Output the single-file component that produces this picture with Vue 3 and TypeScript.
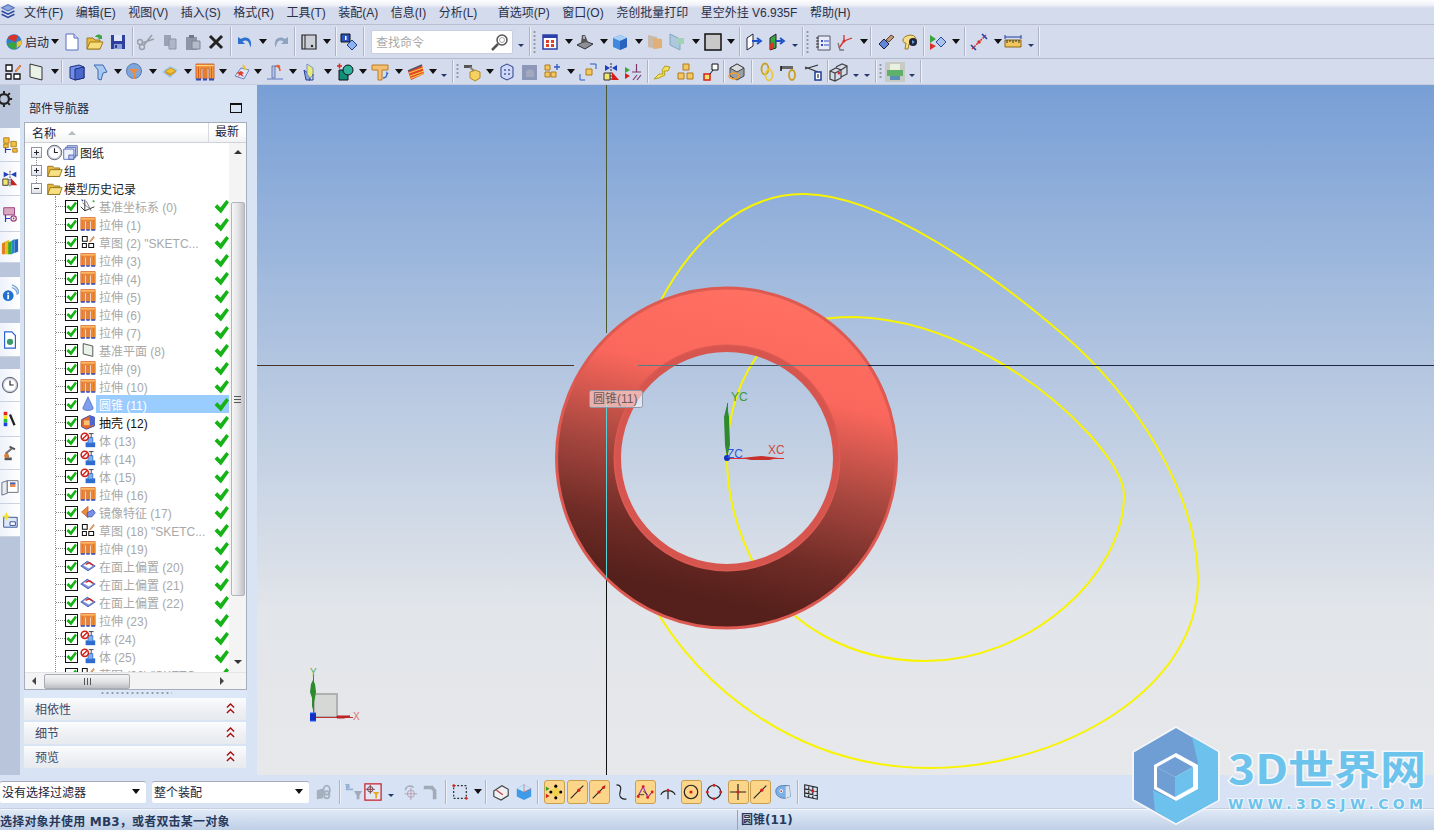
<script setup lang="ts">
type Token = [string, number]

const widths: Record<string, number> = { a: 9, sa: 7, s: 2, d: 3, search: 142, start: 44 }

// 把中心坐标转成 flow 布局用的宽度 + 左间距
function flow(row: Token[], start = 0) {
  let end = start
  return row.map(([raw, x]) => {
    const on = raw.startsWith('*')
    const kind = on ? raw.slice(1) : raw
    const w = on ? 21 : widths[kind] ?? 20
    const ml = x - w / 2 - end
    end = x + w / 2
    return { kind, on, w, ml }
  })
}

const menus = [
  '文件(F)', '编辑(E)', '视图(V)', '插入(S)', '格式(R)', '工具(T)', '装配(A)', '信息(I)', '分析(L)',
  '首选项(P)', '窗口(O)', '尧创批量打印', '星空外挂 V6.935F', '帮助(H)',
]

const row1 = flow([
  ['start', 27], ['a', 55], ['newdoc', 72], ['open', 95], ['save', 118], ['s', 133],
  ['cut', 147], ['copy', 170], ['paste', 193], ['del', 216], ['s', 231],
  ['undo', 245], ['a', 263], ['redo', 281], ['s', 295], ['book', 309], ['a', 327], ['s', 336],
  ['infocard', 349], ['s', 364], ['search', 442], ['sa', 521], ['s', 530], ['d', 534],
  ['grid', 550], ['a', 569], ['scanner', 585], ['a', 604], ['cube', 620], ['a', 639],
  ['folderface', 655], ['panel', 677], ['a', 696], ['square', 713], ['a', 731], ['s', 740],
  ['arrowdoc', 754], ['arrowdoc2', 777], ['sa', 795], ['s', 803], ['d', 807],
  ['notes', 823], ['axes', 845], ['a', 864], ['s', 871], ['wrench', 886], ['palette', 909], ['s', 924],
  ['playdia', 938], ['a', 956], ['s', 965], ['dimred', 979], ['a', 998], ['ruler', 1013], ['sa', 1031], ['s', 1039],
])

const row2 = flow([
  ['sketch', 13], ['plane', 36], ['a', 55], ['s', 62], ['boxblue', 77], ['pointer', 100], ['a', 118],
  ['balloon', 134], ['a', 153], ['plate', 170], ['a', 188], ['extrude', 205], ['a', 223],
  ['spark', 242], ['a', 258], ['weld', 275], ['a', 293], ['bluearrow', 310], ['a', 328],
  ['tealplus', 346], ['a', 363], ['tee', 380], ['a', 399], ['stripes', 416], ['a', 433], ['sa', 444],
  ['s', 453], ['d', 457], ['hammer', 472], ['a', 490], ['gearcube', 507], ['greycube', 530],
  ['cubeplus', 552], ['a', 571], ['cubedash', 588], ['mirror', 611], ['flag', 633], ['s', 648],
  ['link', 662], ['cubes3', 686], ['diag', 711], ['s', 724], ['boxcircle', 737], ['s', 752],
  ['chain', 767], ['chainham', 789], ['scissors', 813], ['s', 828], ['wire', 839], ['sa', 856], ['sa', 867],
  ['s', 876], ['d', 880], ['printer', 895], ['sa', 912], ['s', 921],
])

const row3 = flow([
  ['bolt', 324], ['s', 340], ['filtergrey', 354], ['filterbox', 373], ['sa', 391], ['crossgrey', 410],
  ['pipegrey', 431], ['s', 446], ['dashbox', 460], ['a', 478], ['s', 486], ['wirebook', 501], ['cubeclip', 524], ['s', 538],
  ['*dots', 554], ['*line', 577], ['*linept', 599], ['curve', 621], ['*zigzag', 645], ['tangent', 668],
  ['*circdot', 691], ['circpts', 714], ['*plus', 738], ['*line', 760], ['shield', 783], ['s', 798], ['gridpt', 811],
], 309)

const railCells: [string, number][] = [
  ['gear', 43], ['treecubes', 34], ['treemirror', 34], ['treecyl', 36], ['books', 31], ['', 14], ['wifi', 33], ['', 13],
  ['docglobe', 34], ['', 12], ['clock', 33], ['colorbar', 35], ['robot', 33], ['pages', 34], ['sparkwin', 33],
]
const grayRail = new Set(['gear', ''])

const body = 'body'
const ex = 'extrude'
const feats: [string, string][] = [
  ['csys', '基准坐标系 (0)'], [ex, '拉伸 (1)'], ['sketch', '草图 (2) "SKETC...'], [ex, '拉伸 (3)'], [ex, '拉伸 (4)'],
  [ex, '拉伸 (5)'], [ex, '拉伸 (6)'], [ex, '拉伸 (7)'], ['plane', '基准平面 (8)'], [ex, '拉伸 (9)'], [ex, '拉伸 (10)'],
  ['cone', '圆锥 (11)'], ['shell', '抽壳 (12)'], [body, '体 (13)'], [body, '体 (14)'], [body, '体 (15)'], [ex, '拉伸 (16)'],
  ['mirrorfeat', '镜像特征 (17)'], ['sketch', '草图 (18) "SKETC...'], [ex, '拉伸 (19)'], ['offset', '在面上偏置 (20)'],
  ['offset', '在面上偏置 (21)'], ['offset', '在面上偏置 (22)'], [ex, '拉伸 (23)'], [body, '体 (24)'], [body, '体 (25)'],
  ['sketch', '草图 (26) "SKETC...'],
]

const panels = ['相依性', '细节', '预览']
</script>

<template>
  <div class="app">
    <!-- 图标 -->
    <svg class="defs" xmlns="http://www.w3.org/2000/svg">
      <symbol id="logo" viewBox="0 0 20 20"><path d="M2 6l8-4 8 4-8 4z" fill="#8fa6e0" stroke="#2b4aa0"/><path d="M2 10l8 4 8-4M2 14l8 4 8-4" fill="none" stroke="#2b4aa0" stroke-width="2"/></symbol>
      <symbol id="start" viewBox="0 0 20 20"><circle cx="10" cy="10" r="8.500" fill="#2f7fd0"/><path d="M3 6a8 8 0 0 1 11-3l-2 7z" fill="#d8322a"/><path d="M3 12a8 8 0 0 0 9 6l1-6-5-2z" fill="#3aa63a"/><path d="M13 10l5-2 0 5-5 4z" fill="#f2c230"/></symbol>
      <symbol id="newdoc" viewBox="0 0 20 20"><path d="M4 2h8l4 4v12H4z" fill="#fff" stroke="#5a6ec0"/><path d="M12 2v4h4" fill="#d6def5" stroke="#5a6ec0"/></symbol>
      <symbol id="open" viewBox="0 0 20 20"><path d="M2 17V6h6l2 2h5v9z" fill="#e8b93c" stroke="#a07a1e"/><path d="M2 17l3-7h13l-3 7z" fill="#f7dc7a" stroke="#a07a1e"/><path d="M10 5c2-3 5-3 6-1l1-1v4h-4l1-1c-1-1-2-1-4-1z" fill="#3aa63a"/></symbol>
      <symbol id="folder" viewBox="0 0 20 20"><path d="M2 17V5h6l2 2h6v10z" fill="#e8b93c" stroke="#8a6a1a"/><path d="M2 17l3-8h14l-3 8z" fill="#f9e080" stroke="#8a6a1a"/></symbol>
      <symbol id="sheets" viewBox="0 0 20 20"><path d="M6 2h12v12H6z" fill="#cfd8f0" stroke="#4a62b0"/><path d="M4 4h12v12H4z" fill="#dfe6f8" stroke="#4a62b0"/><path d="M2 6h12v12H2z" fill="#eef2fc" stroke="#4a62b0"/><path d="M8 13h6v5H8z" fill="#b8c6ea" stroke="#4a62b0"/></symbol>
      <symbol id="save" viewBox="0 0 20 20"><path d="M3 3h14v14H3z" fill="#2f3f9e"/><path d="M6 3h8v6H6z" fill="#dfe6f7"/><path d="M6 12h8v5H6z" fill="#8fa1d6"/><path d="M7 13h2v3H7z" fill="#2f3f9e"/></symbol>
      <symbol id="cut" viewBox="0 0 20 20"><path d="M15 3l-8 10M17 7L5 11" stroke="#9aa0a8" stroke-width="1.600" fill="none"/><circle cx="5" cy="15" r="2.500" fill="none" stroke="#9aa0a8" stroke-width="1.500"/><circle cx="3" cy="10" r="2.500" fill="none" stroke="#9aa0a8" stroke-width="1.500"/></symbol>
      <symbol id="copy" viewBox="0 0 20 20"><path d="M4 3h7v11H4z" fill="#9aa2b4"/><path d="M9 7h7v10H9z" fill="#aeb6c8" stroke="#8d95a8"/></symbol>
      <symbol id="paste" viewBox="0 0 20 20"><path d="M3 5h11v13H3z" fill="#8e96a6"/><path d="M6 3h5v3H6z" fill="#6f7686"/><path d="M9 9h8v8H9z" fill="#b4bbc9" stroke="#7f8696"/></symbol>
      <symbol id="del" viewBox="0 0 20 20"><path d="M4 4l12 12M16 4L4 16" stroke="#222" stroke-width="3"/></symbol>
      <symbol id="undo" viewBox="0 0 20 20"><path d="M3 5v7h7l-2.500-2.500c3-2 6-1 7 3l1 3c2-6-1-10-5-10-2 0-3 .5-4.500 1.500z" fill="#2f6fd0"/></symbol>
      <symbol id="redo" viewBox="0 0 20 20"><path d="M17 5v7h-7l2.500-2.500c-3-2-6-1-7 3l-1 3c-2-6 1-10 5-10 2 0 3 .5 4.500 1.500z" fill="#8ca4bf"/></symbol>
      <symbol id="book" viewBox="0 0 20 20"><path d="M3 3h14v14H3z" fill="#ccd0d6" stroke="#222" stroke-width="1.200"/><path d="M6 3v14" stroke="#222"/><circle cx="13" cy="14" r="1.200" fill="#222"/></symbol>
      <symbol id="infocard" viewBox="0 0 20 20"><path d="M2 2h9v8H2z" fill="#2a55c0" stroke="#111"/><path d="M6 4h1.500v4H6z" fill="#fff"/><path d="M13 8l5 5-5 5-5-5z" fill="#8fb2ea" stroke="#1e3e90"/></symbol>
      <symbol id="mag" viewBox="0 0 20 20"><circle cx="12" cy="8" r="5" fill="#fff" stroke="#555" stroke-width="1.500"/><circle cx="12" cy="8" r="2.500" fill="none" stroke="#aaa"/><path d="M8 12l-6 6" stroke="#555" stroke-width="2.500"/></symbol>
      <symbol id="grid" viewBox="0 0 20 20"><path d="M3 3h14v14H3z" fill="#fff" stroke="#2b3fa8" stroke-width="1.500"/><path d="M3 3h14v3H3z" fill="#2b3fa8"/><path d="M6 8h3v3H6zM11 8h3v3h-3zM6 12h3v3H6zM11 12h3v3h-3z" fill="#e0402a"/></symbol>
      <symbol id="scanner" viewBox="0 0 20 20"><path d="M2 13l8-4 8 3-8 5z" fill="#8a8f98" stroke="#333"/><path d="M6 11l1-8h3l3 7z" fill="#555"/><path d="M8 4h2v3H8z" fill="#aab"/></symbol>
      <symbol id="cube" viewBox="0 0 20 20"><path d="M3 6l7-3 7 3v9l-7 3-7-3z" fill="#3f8ae0"/><path d="M3 6l7 3 7-3-7-3z" fill="#a8d0f5"/><path d="M10 9v9l7-3V6z" fill="#2a62c0"/></symbol>
      <symbol id="folderface" viewBox="0 0 20 20" opacity=".65"><path d="M3 3l9 2v12l-9-2z" fill="#c2a98a"/><path d="M8 6l9 1v9l-9 1z" fill="#e89a3c"/></symbol>
      <symbol id="panel" viewBox="0 0 20 20" opacity=".75"><path d="M3 2l10 5v11l-10-5z" fill="#9fc4d8" stroke="#6c93b0"/><path d="M11 6h6v6h-6z" fill="#8fd0a0"/></symbol>
      <symbol id="square" viewBox="0 0 20 20"><path d="M2 2h16v16H2z" fill="#c9c9c9" stroke="#111" stroke-width="1.500"/></symbol>
      <symbol id="arrowdoc" viewBox="0 0 20 20"><path d="M3 6l6-4v12l-6 4z" fill="#fff" stroke="#223"/><path d="M8 9h7M13 6l4 3-4 3" fill="none" stroke="#1e50c8" stroke-width="1.800"/></symbol>
      <symbol id="arrowdoc2" viewBox="0 0 20 20"><path d="M3 6l6-4v14l-6 2z" fill="#3aa63a" stroke="#223"/><path d="M3 12l4-2v6l-4 2z" fill="#d8322a"/><path d="M9 9h6M13 6l4 3-4 3" fill="none" stroke="#1e50c8" stroke-width="1.800"/></symbol>
      <symbol id="notes" viewBox="0 0 20 20"><path d="M5 4h12v14H5z" fill="#e8ecf8" stroke="#556"/><path d="M3 6h3M3 9h3M3 12h3M3 15h3" stroke="#333"/><path d="M8 8h2v2H8zM8 12h2v2H8z" fill="#3050c0"/><path d="M11 9h5M11 13h5" stroke="#3050c0"/></symbol>
      <symbol id="axes" viewBox="0 0 20 20"><path d="M9 9l8-3M9 9V3M9 9l-5 7" stroke="#d8322a" stroke-width="1.300" fill="none"/><path d="M3 11l2 7h4" stroke="#777" stroke-width="1.300" fill="none"/><circle cx="9" cy="9" r="1.500" fill="#d8322a"/></symbol>
      <symbol id="wrench" viewBox="0 0 20 20"><path d="M3 12l5-5 5 5-5 5z" fill="#5f86d8" stroke="#223"/><path d="M10 8l5-5 3 2-5 5z" fill="#c69a6a" stroke="#544"/></symbol>
      <symbol id="palette" viewBox="0 0 20 20"><path d="M4 8c0-4 9-7 12-3s-1 8-6 7l-1 5H6l1-6c-2 0-3-1-3-3z" fill="#f6dd8c" stroke="#a07a1e"/><circle cx="14" cy="10" r="4" fill="#223"/><path d="M13 8l3 2-3 2z" fill="#5f9de0"/></symbol>
      <symbol id="playdia" viewBox="0 0 20 20"><path d="M2 3l6 4-6 4z" fill="#3aa63a"/><path d="M2 11l6 3-6 4z" fill="#d8322a"/><path d="M8 10l5-5 5 5-5 5z" fill="#a9c4ec" stroke="#2b4aa0"/></symbol>
      <symbol id="dimred" viewBox="0 0 20 20"><path d="M3 17L17 3" stroke="#d8322a" stroke-width="1.500" stroke-dasharray="2 1"/><path d="M2 13l5 5M13 2l5 5" stroke="#1e3ea8" stroke-width="1.500"/><circle cx="10" cy="10" r="1.800" fill="#d8322a"/></symbol>
      <symbol id="ruler" viewBox="0 0 20 20"><path d="M2 8h16v7H2z" fill="#f2c65a" stroke="#8a6a20"/><path d="M4 8v3M7 8v2M10 8v3M13 8v2M16 8v3" stroke="#333"/><path d="M2 5h16M2 3v4M18 3v4" stroke="#1e3ea8"/></symbol>
      <symbol id="sketch" viewBox="0 0 20 20"><path d="M3 3h6v6H3zM3 12h5v5H3zM11 12h6v5h-6z" fill="#fff" stroke="#111" stroke-width="1.300"/><path d="M12 9l5-6 1 1-5 6z" fill="#e8b93c" stroke="#c8392a" stroke-width=".6"/></symbol>
      <symbol id="plane" viewBox="0 0 20 20"><path d="M4 2l12 3v13l-12-3z" fill="#e9f2e6" stroke="#333"/></symbol>
      <symbol id="boxblue" viewBox="0 0 20 20"><path d="M3 5l9-2 5 2v11l-9 2-5-2z" fill="#6f8fe6" stroke="#1e2e80"/><path d="M8 7v11l9-2V5z" fill="#4a68cc" stroke="#1e2e80"/></symbol>
      <symbol id="pointer" viewBox="0 0 20 20"><path d="M4 3h9l4 7-4 1-2 7-3-1V8z" fill="#a8c8f0" stroke="#3a68b0"/></symbol>
      <symbol id="balloon" viewBox="0 0 20 20"><circle cx="10" cy="9" r="7.500" fill="#7fa6d8" stroke="#5a7bb0"/><path d="M5 7h10L11 11v6H9v-6z" fill="#f08a3c"/></symbol>
      <symbol id="plate" viewBox="0 0 20 20"><path d="M2 10l8-6 8 4-8 8z" fill="#9cc8ec"/><path d="M5 9l6-3 5 3-6 3z" fill="#f2c230" stroke="#c8962a"/><path d="M5 9v2l5 3 6-4V9l-6 3z" fill="#d89a20"/></symbol>
      <symbol id="extrude" viewBox="0 0 20 20"><path d="M1 2h18v15h-5V6h-2v11H8V6H6v11H1z" fill="#f59a3a" stroke="#c8501e" stroke-width=".8"/><path d="M1 3.500h18" stroke="#ffd48a"/><path d="M3.500 5v11M10 5v11M16.500 5v11" stroke="#d8601e"/><path d="M1 17.500h5M8 17.500h4M14 17.500h5" stroke="#2b4ac0" stroke-width="2"/></symbol>
      <symbol id="spark" viewBox="0 0 20 20"><path d="M3 14l6-8 8 2-5 9z" fill="#dfe6f8" stroke="#6c7fc0"/><path d="M9 9l3 2-2 1 2 3-4-2-2 2 1-3-3-1 3-1z" fill="#e0402a"/><path d="M11 3l3 5" stroke="#f2c230" stroke-width="2"/></symbol>
      <symbol id="weld" viewBox="0 0 20 20"><path d="M2 16h16v2H2z" fill="#98a8d8"/><path d="M7 4h3v12H7z" fill="#b8c4e4" stroke="#6a7cb0"/><path d="M10 4c4 0 5 2 5 5" stroke="#e05a2a" stroke-width="1.500" fill="none"/><path d="M12 3l3 1-1 2" stroke="#e05a2a" fill="none"/></symbol>
      <symbol id="bluearrow" viewBox="0 0 20 20"><path d="M4 8l6 5v5H6z" fill="#8aa6e0" stroke="#2b3f90"/><path d="M7 2l6 4v7l-3 3-3-4z" fill="#e6ec7a" stroke="#5a6ec0" stroke-width=".7"/><path d="M13 12v6h-4" stroke="#2b3f90" fill="none"/></symbol>
      <symbol id="tealplus" viewBox="0 0 20 20"><path d="M3 8h9v10H3z" fill="#0f8f7a" stroke="#111"/><circle cx="12" cy="8" r="5" fill="#2fb09a" stroke="#111"/><path d="M1 4h5M3.500 1.500v5" stroke="#e0201a" stroke-width="1.500"/></symbol>
      <symbol id="tee" viewBox="0 0 20 20"><path d="M2 3h16v5h-6v10H8V8H2z" fill="#f2c070" stroke="#c07a20"/><path d="M13 16c3 0 4-2 4-5l1 1" fill="none" stroke="#2b6ac0" stroke-width="1.400"/></symbol>
      <symbol id="stripes" viewBox="0 0 20 20"><path d="M2 9l14-6 2 9-13 6z" fill="#e8402a"/><path d="M3 11l14-5M4 14l14-5M4.500 16.500l13-5" stroke="#f2d040" stroke-width="1.100"/><path d="M2 9l14-6" stroke="#556" stroke-width="1.500"/></symbol>
      <symbol id="hammer" viewBox="0 0 20 20"><path d="M8 10l5-2 5 2v6l-5 3-5-3z" fill="#f6d060" stroke="#b08a20"/><path d="M2 3h8v3H2z" fill="#555"/><path d="M8 5l4 4" stroke="#887" stroke-width="2"/></symbol>
      <symbol id="gearcube" viewBox="0 0 20 20"><path d="M4 5l6-3 6 3v10l-6 3-6-3z" fill="#cfd8f5" stroke="#2b3f90"/><path d="M7 7h2v2H7zM11 7h2v2h-2zM7 11h2v2H7zM11 11h2v2h-2z" fill="#6a7cc0"/></symbol>
      <symbol id="greycube" viewBox="0 0 20 20"><path d="M2 3h15v15H2z" fill="#8d97b8"/><path d="M6 9l4-2 4 2v6H6z" fill="#a3a9bd"/></symbol>
      <symbol id="cubeplus" viewBox="0 0 20 20"><path d="M3 3h5v5H3zM3 10h5v5H3zM9 10h5v5H9z" fill="#f4c860" stroke="#b07a18"/><path d="M15 2v6M12 5h6" stroke="#2b5ac0" stroke-width="1.300"/></symbol>
      <symbol id="cubedash" viewBox="0 0 20 20"><path d="M8 7h6v6H8z" fill="#f4c860" stroke="#b07a18"/><path d="M2 12v6h5M12 2h6v5" fill="none" stroke="#2b5ac0"/></symbol>
      <symbol id="mirror" viewBox="0 0 20 20"><path d="M10 1v18" stroke="#223" stroke-dasharray="2 1"/><path d="M4 3l5 3-5 3zM16 3l-5 3 5 3z" fill="#1e3ec0"/><path d="M3 11h6v7H3z" fill="#f2e66a" stroke="#333"/><path d="M11 10l7 8h-7z" fill="#d8201a"/></symbol>
      <symbol id="flag" viewBox="0 0 20 20"><path d="M2 5l5 3-5 3z" fill="#3aa63a"/><path d="M2 11l5 3-5 3z" fill="#d8201a"/><path d="M9 10h9M13.500 2v8M10 18l4-5M14 18l4-5" stroke="#7a3a6a" stroke-width="1.200"/></symbol>
      <symbol id="link" viewBox="0 0 20 20"><path d="M2 17l5-5h4l-1-4 3-4 5 1-2 4h-4l1 4-6 3z" fill="#f2e25a" stroke="#b0a020"/></symbol>
      <symbol id="cubes3" viewBox="0 0 20 20"><path d="M7 2h6v6H7zM2 11h6v6H2zM11 11h6v6h-6z" fill="#f4c860" stroke="#b07a18"/></symbol>
      <symbol id="diag" viewBox="0 0 20 20"><path d="M11 2h6v6h-6z" fill="#fff" stroke="#111"/><path d="M3 12h6v6H3z" fill="#f2e66a" stroke="#d8201a" stroke-width="1.500"/><path d="M9 12l3-4" stroke="#111"/></symbol>
      <symbol id="boxcircle" viewBox="0 0 20 20"><path d="M3 6l7-4 7 4v8l-7 4-7-4z" fill="#9a9fa8" stroke="#444"/><path d="M3 6l7 4 7-4-7-4z" fill="#d8dbe0" stroke="#444"/><ellipse cx="7" cy="14" rx="5" ry="3" fill="none" stroke="#f0a030" stroke-width="1.500"/></symbol>
      <symbol id="chain" viewBox="0 0 20 20"><ellipse cx="8" cy="7" rx="3.500" ry="5.500" fill="none" stroke="#c8a020" stroke-width="1.800"/><ellipse cx="12" cy="13" rx="3.500" ry="5.500" fill="none" stroke="#e8c840" stroke-width="1.800"/></symbol>
      <symbol id="chainham" viewBox="0 0 20 20"><path d="M2 4h12v3H2z" fill="#666"/><path d="M2 4v5" stroke="#111" stroke-width="1.500"/><ellipse cx="13" cy="13" rx="3" ry="5" fill="none" stroke="#c8a020" stroke-width="1.800"/></symbol>
      <symbol id="scissors" viewBox="0 0 20 20"><path d="M2 7l13-4M2 5l13 5" stroke="#333" stroke-width="1.300"/><path d="M12 10h6v8h-6z" fill="#fff" stroke="#1e3e90" stroke-width="1.500"/><path d="M14.500 12h1v4h-1z" fill="#111"/></symbol>
      <symbol id="wire" viewBox="0 0 20 20"><path d="M1 9l6-3 5 2v8l-6 3-5-2zM7 5l6-3 5 2v8l-6 3M1 9l5 2 6-3M6 11v8M12 8l6-4" fill="none" stroke="#444" stroke-width="1.200"/><circle cx="10" cy="11" r="1.500" fill="#d8322a"/></symbol>
      <symbol id="printer" viewBox="0 0 20 20"><path d="M0 0h20v20H0z" fill="#c8cbc4"/><path d="M5 2h10v6H5z" fill="#e8f0e0"/><path d="M2 8h16v6H2z" fill="#5fb06a"/><path d="M5 14h10v4H5z" fill="#5c8fb8"/></symbol>
      <symbol id="bolt" viewBox="0 0 20 20" opacity=".55"><path d="M2 8l7-2v11l-7 1z" fill="#7d8592"/><ellipse cx="13" cy="8" rx="3.500" ry="5" fill="none" stroke="#7d8592" stroke-width="2"/><ellipse cx="13" cy="13" rx="3" ry="4" fill="none" stroke="#7d8592" stroke-width="2"/></symbol>
      <symbol id="filtergrey" viewBox="0 0 20 20" opacity=".6"><path d="M10 9h9l-3 5v4h-3v-4z" fill="#7d8592"/><path d="M2 3v4h7M5 5l-3-3 3 0" fill="none" stroke="#6c8fbf" stroke-width="2"/></symbol>
      <symbol id="filterbox" viewBox="0 0 20 20"><path d="M1 1h18v18H1z" fill="#e2e9f6" stroke="#c8202a" stroke-width="1.400"/><circle cx="7" cy="7" r="3" fill="none" stroke="#444"/><path d="M7 2v10M2 7h10" stroke="#8a2a30"/><path d="M10 10h7l-2.500 3v4h-2v-4z" fill="#e8a820"/></symbol>
      <symbol id="crossgrey" viewBox="0 0 20 20" opacity=".6"><circle cx="11" cy="12" r="4" fill="none" stroke="#9a6f7f"/><path d="M11 5v14M4 12h14" stroke="#9a6f7f"/><path d="M5 8c0-5 7-6 9-3" fill="none" stroke="#7d8592" stroke-width="1.600"/></symbol>
      <symbol id="pipegrey" viewBox="0 0 20 20" opacity=".6"><path d="M2 3h10l4 5v10h-4V9l-2-2H2z" fill="#7d8592"/></symbol>
      <symbol id="dashbox" viewBox="0 0 20 20"><path d="M3 3h14v14H3z" fill="none" stroke="#222" stroke-dasharray="2 2" stroke-width="1.300"/><circle cx="3" cy="3" r="1.500" fill="#d8201a"/><circle cx="17" cy="17" r="1.500" fill="#d8201a"/></symbol>
      <symbol id="wirebook" viewBox="0 0 20 20"><path d="M2 9l9-6 7 4v7l-8 5-8-4z" fill="#eef0f4" stroke="#444" stroke-width="1.300"/><path d="M5 8l7 5" stroke="#c84040" stroke-width="1.500"/></symbol>
      <symbol id="cubeclip" viewBox="0 0 20 20"><path d="M2 6l8-4 8 4v9l-8 4-8-4z" fill="#3f9ae8"/><path d="M2 6l8 4 8-4-8-4z" fill="#c8e6fa"/><path d="M10 1v9l8-4" fill="none" stroke="#d86a6a" stroke-width=".8"/></symbol>
      <symbol id="dots" viewBox="0 0 20 20"><path d="M1 4l4 2.500-4 2.500z" fill="#2ca02c"/><path d="M1 12l4 2.500-4 2.500z" fill="#d8201a"/><path d="M12 3l6 7-6 7-6-7z" fill="#f2d050"/><circle cx="12" cy="3.500" r="1.700"/><circle cx="6.500" cy="10" r="1.700"/><circle cx="17.500" cy="10" r="1.700"/><circle cx="12" cy="16.500" r="1.700"/></symbol>
      <symbol id="line" viewBox="0 0 20 20"><path d="M3 17L17 3" stroke="#222" stroke-width="1.200"/><circle cx="12" cy="8" r="1.800" fill="#d8201a"/></symbol>
      <symbol id="linept" viewBox="0 0 20 20"><path d="M3 17L17 3" stroke="#222" stroke-width="1.200"/><circle cx="10" cy="10" r="1.800" fill="#d8201a"/><circle cx="15" cy="5" r="1.800" fill="#d8201a"/></symbol>
      <symbol id="curve" viewBox="0 0 20 20"><path d="M5 2c6 0 5 5 4 8s-1 8 7 8" fill="none" stroke="#222" stroke-width="1.300"/></symbol>
      <symbol id="zigzag" viewBox="0 0 20 20"><path d="M2 15l6-11 5 12 5-6" fill="none" stroke="#a030a0" stroke-width="1.300"/><path d="M3 13h6M8 9l5 4" stroke="#333"/><circle cx="2.500" cy="15" r="1.600" fill="#d8201a"/><circle cx="8" cy="4" r="1.600" fill="#d8201a"/><circle cx="13" cy="16" r="1.600" fill="#d8201a"/><circle cx="18" cy="10" r="1.600" fill="#d8201a"/></symbol>
      <symbol id="tangent" viewBox="0 0 20 20"><path d="M2 13c3-6 13-6 16 0M10 7v11" fill="none" stroke="#222" stroke-width="1.300"/><circle cx="10" cy="8" r="1.500" fill="#d8201a"/></symbol>
      <symbol id="circdot" viewBox="0 0 20 20"><circle cx="10" cy="10" r="7.500" fill="none" stroke="#222" stroke-width="1.300"/><circle cx="10" cy="10" r="1.800" fill="#d8201a"/></symbol>
      <symbol id="circpts" viewBox="0 0 20 20"><circle cx="10" cy="10" r="7.500" fill="none" stroke="#222" stroke-width="1.300"/><g fill="#d8201a"><circle cx="10" cy="2.500" r="1.700"/><circle cx="10" cy="17.500" r="1.700"/><circle cx="2.500" cy="10" r="1.700"/><circle cx="17.500" cy="10" r="1.700"/></g></symbol>
      <symbol id="plus" viewBox="0 0 20 20"><path d="M10 1v18M1 10h18" stroke="#222" stroke-width="1.300"/><circle cx="10" cy="10" r="1.800" fill="#d8201a"/></symbol>
      <symbol id="shield" viewBox="0 0 20 20"><path d="M2 9c0-5 5-7 15-6l1 12-6 2c-6 0-10-3-10-8z" fill="#7ab0e8" stroke="#5a7aa8"/><path d="M13 4l4-1 1 12-5 2z" fill="#dde3ea"/><circle cx="8" cy="9" r="2" fill="#fff"/><circle cx="8" cy="9" r="1" fill="#d8201a"/></symbol>
      <symbol id="gridpt" viewBox="0 0 20 20"><path d="M3 2l14 3v13L3 15zM7.500 3v13M12 4v13M3 6.500l14 3M3 11l14 3" fill="none" stroke="#222" stroke-width="1.200"/><circle cx="12" cy="9" r="1.800" fill="#d8201a"/></symbol>
      <symbol id="gear" viewBox="0 0 20 20"><circle cx="10" cy="10" r="5.500" fill="none" stroke="#222" stroke-width="2.500"/><path d="M10 1v3M10 16v3M1 10h3M16 10h3M3.500 3.500l2 2M14.500 14.500l2 2M3.500 16.500l2-2M14.500 5.500l2-2" stroke="#222" stroke-width="2.200"/></symbol>
      <symbol id="treecubes" viewBox="0 0 20 20"><path d="M3 2h6v6H3zM11 6h6v6h-6zM3 9h5v4H3z" fill="#f2c040" stroke="#b07a18"/><path d="M5 13v6M5 15h6" stroke="#1e3ec0" stroke-width="1.300"/><path d="M13 14h5v4h-5z" fill="#f2c040" stroke="#b07a18"/></symbol>
      <symbol id="treemirror" viewBox="0 0 20 20"><path d="M10 1v18" stroke="#223" stroke-dasharray="2 1"/><path d="M3 2l6 3-6 3zM17 2l-6 3 6 3z" fill="#1e3ec0"/><path d="M2 10h6v7H2z" fill="#f2e66a" stroke="#333"/><path d="M11 9l7 8h-7z" fill="#c8201a"/></symbol>
      <symbol id="treecyl" viewBox="0 0 20 20"><path d="M3 3h12v8H3z" fill="#d8a8c0" stroke="#9a3a7a"/><path d="M5 11v8M5 15h5" stroke="#1e3ec0" stroke-width="1.300"/><circle cx="14" cy="15" r="3" fill="none" stroke="#9a3a7a" stroke-width="1.300"/><circle cx="14" cy="15" r="1" fill="#9a3a7a"/></symbol>
      <symbol id="books" viewBox="0 0 20 20"><path d="M1 6l4-2v14H1z" fill="#e0801e"/><path d="M5 4l4-2v16H5z" fill="#e0c020"/><path d="M8 5l4-2v15H8z" fill="#3aa63a"/><path d="M12 3l3-2v15l-3 2z" fill="#1e8ac8"/><path d="M15 2l4-1v14l-4 2z" fill="#2a62c0"/></symbol>
      <symbol id="wifi" viewBox="0 0 20 20"><circle cx="8" cy="13" r="6" fill="#1e70d0"/><path d="M7 9.500h2v1.500H7zM7 12h2v5H7z" fill="#fff"/><path d="M12 4a8 8 0 0 1 6 8M12 1a11 11 0 0 1 8 10" fill="none" stroke="#7aa4d8" stroke-width="1.600"/></symbol>
      <symbol id="docglobe" viewBox="0 0 20 20"><path d="M4 1h8l4 4v14H4z" fill="#fff" stroke="#2a62d0" stroke-width="1.300"/><circle cx="10" cy="12" r="3.500" fill="#3a9a6a"/></symbol>
      <symbol id="clock" viewBox="0 0 20 20"><circle cx="10" cy="10" r="8.500" fill="#c5cdd8" stroke="#556"/><circle cx="10" cy="10" r="6.500" fill="#fff"/><path d="M10 5v5h4" fill="none" stroke="#222" stroke-width="1.300"/></symbol>
      <symbol id="colorbar" viewBox="0 0 20 20"><path d="M3 2h4v4H3z" fill="#e82020"/><path d="M3 6h4v4H3z" fill="#f0e020"/><path d="M3 10h4v4H3z" fill="#20c040"/><path d="M3 14h4v4H3z" fill="#2040e0"/><path d="M10 5l5 12" stroke="#222" stroke-width="2.500"/></symbol>
      <symbol id="robot" viewBox="0 0 20 20"><path d="M4 18h8v-3H4z" fill="#555"/><path d="M8 15l-2-5 6-5" fill="none" stroke="#777" stroke-width="2.500"/><path d="M10 2l6 3-1 2-6-3z" fill="#555"/><circle cx="6" cy="13" r="2.500" fill="#e87a20"/></symbol>
      <symbol id="pages" viewBox="0 0 20 20"><path d="M1 5l6-2v14l-6 2z" fill="#e8ecf2" stroke="#667"/><path d="M7 3h12v13H7z" fill="#fff" stroke="#667"/><path d="M10 5h6v5h-6z" fill="#f08a50"/><path d="M10 5h6v2h-6z" fill="#3a6ad0"/></symbol>
      <symbol id="sparkwin" viewBox="0 0 20 20"><path d="M3 7h15v11H3z" fill="#dce8fa" stroke="#2a4a90"/><path d="M10 12h6v4h-6z" fill="#fff" stroke="#2a4a90"/><path d="M6 1l1.500 3.500L11 6 7.500 7.500 6 11 4.500 7.500 1 6l3.500-1.500z" fill="#f4e040"/></symbol>
      <symbol id="csys" viewBox="0 0 20 20"><path d="M6 2v14l12-5M6 16l-5-5" fill="none" stroke="#333" stroke-width="1.200"/><path d="M3 6l10 8M8 4l6 12" stroke="#667"/><circle cx="17" cy="4" r="1.300" fill="#3aa63a"/><path d="M2 2l2 2" stroke="#1e3ec0" stroke-width="1.500"/></symbol>
      <symbol id="cone" viewBox="0 0 20 20"><path d="M10 1l6.500 14a6.500 3 0 0 1-13 0z" fill="#7f9fee" stroke="#3a5ab0" stroke-width=".8"/></symbol>
      <symbol id="shell" viewBox="0 0 20 20"><path d="M2 7l10-5 6 2v11l-10 4-6-3z" fill="#e86a2a" stroke="#1e3ec0"/><path d="M12 2v13l6-2V4z" fill="#4a68d0"/><path d="M5 8h7v6H5z" fill="#f8c070"/></symbol>
      <symbol id="body" viewBox="0 0 20 20"><path d="M7 13h12v6H7z" fill="#2f6cd0"/><path d="M10 7h6v7h-6z" fill="#7fb0ec" stroke="#2f6cd0"/><circle cx="6" cy="6" r="4.500" fill="#fff" stroke="#d0201a" stroke-width="2"/><path d="M3 9l6-6" stroke="#d0201a" stroke-width="1.800"/><path d="M11 2h6M14 2v5" stroke="#222"/></symbol>
      <symbol id="mirrorfeat" viewBox="0 0 20 20"><path d="M2 10l8-7v14z" fill="#f08a3c" stroke="#c05a20"/><path d="M9 11l7-4 3 4-4 5H9z" fill="#7a90e8" stroke="#3a50b0"/></symbol>
      <symbol id="offset" viewBox="0 0 20 20"><path d="M1 10l8-6 10 6-9 6z" fill="#7a90d8" stroke="#3a50b0"/><path d="M4 9l5-3 7 4-5 3z" fill="#fff"/><path d="M7 8l5-2 4 3" fill="none" stroke="#d8201a" stroke-width="1.500"/></symbol>
      <symbol id="check" viewBox="0 0 14 14"><path d="M.5 7.500L3 5l3 3 5.500-7L14 3 6.500 13.500z" fill="#15b315"/></symbol>
      <symbol id="chev" viewBox="0 0 10 12"><path d="M1 5l4-4 4 4M1 11l4-4 4 4" fill="none" stroke="#a80c0c" stroke-width="1.500"/></symbol>
    </svg>

    <header class="menubar">
      <svg class="menu-logo"><use href="#logo" /></svg>
      <span v-for="(m, i) in menus" :key="m" class="menu" :class="{ wide: i === 9 }">{{ m }}</span>
    </header>

    <div class="toolbar tall">
      <template v-for="(t, i) in row1" :key="i">
        <div class="cell" :class="t.kind" :style="{ width: t.w + 'px', marginLeft: t.ml + 'px' }">
          <template v-if="t.kind === 'start'">
            <svg class="ico"><use href="#start" /></svg><span>启动</span>
          </template>
          <template v-else-if="t.kind === 'search'">
            <span class="placeholder">查找命令</span>
            <svg class="ico"><use href="#mag" /></svg>
          </template>
          <svg v-else-if="!widths[t.kind]" class="ico"><use :href="'#' + t.kind" /></svg>
        </div>
      </template>
    </div>
    <div class="toolbar">
      <div
        v-for="(t, i) in row2"
        :key="i"
        class="cell"
        :class="t.kind"
        :style="{ width: t.w + 'px', marginLeft: t.ml + 'px' }"
      >
        <svg v-if="!widths[t.kind]" class="ico"><use :href="'#' + t.kind" /></svg>
      </div>
    </div>

    <main class="main">
      <aside class="rail">
        <div
          v-for="(c, i) in railCells"
          :key="i"
          class="rail-cell"
          :class="{ white: !grayRail.has(c[0]), gearcell: c[0] === 'gear' }"
          :style="{ height: c[1] + 'px' }"
        >
          <svg v-if="c[0]" class="ico"><use :href="'#' + c[0]" /></svg>
        </div>
      </aside>

      <section class="nav">
        <div class="nav-head">
          <span>部件导航器</span>
          <i class="maximize"></i>
        </div>
        <div class="nav-box">
          <div class="cols">
            <span class="col-name">名称</span>
            <i class="sort"></i>
            <span class="col-new">最新</span>
          </div>
          <div class="tree-wrap">
            <div class="tree">
              <div class="tree-line top"></div>
              <div class="tree-line feat"></div>
              <div class="root">
                <i class="exp plus"></i>
                <svg class="ico small"><use href="#clock" /></svg>
                <svg class="ico small"><use href="#sheets" /></svg>
                <span>图纸</span>
              </div>
              <div class="root">
                <i class="exp plus"></i>
                <svg class="ico small"><use href="#folder" /></svg>
                <span>组</span>
              </div>
              <div class="root">
                <i class="exp"></i>
                <svg class="ico small"><use href="#folder" /></svg>
                <span>模型历史记录</span>
              </div>
              <div v-for="(f, i) in feats" :key="i" class="feat-row">
                <i class="dash"></i>
                <i class="box"><svg><use href="#check" /></svg></i>
                <svg class="ico small"><use :href="'#' + f[0]" /></svg>
                <div class="feat-main" :class="{ sel: i === 11, strong: i === 12 }">
                  <span>{{ f[1] }}</span>
                  <svg class="ok"><use href="#check" /></svg>
                </div>
              </div>
            </div>
            <div class="vscroll">
              <i class="tri up"></i>
              <div class="vthumb"><i class="grip-h"></i></div>
              <i class="tri down"></i>
            </div>
          </div>
          <div class="hscroll">
            <i class="tri left"></i>
            <div class="hthumb"><i class="grip-v"></i></div>
            <i class="tri right"></i>
          </div>
        </div>
        <div class="sash"></div>
        <div v-for="p in panels" :key="p" class="fold">
          <span>{{ p }}</span>
          <svg><use href="#chev" /></svg>
        </div>
      </section>

      <div class="viewport">
        <svg viewBox="257 85 1177 690" width="1177" height="690" xmlns="http://www.w3.org/2000/svg">
          <defs>
            <linearGradient id="sky" x1="0" y1="0" x2="0" y2="1">
              <stop offset="0" stop-color="#789fd6" />
              <stop offset="0.4" stop-color="#b2c5e0" />
              <stop offset="0.76" stop-color="#e2e5ea" />
              <stop offset="1" stop-color="#e7e8ea" />
            </linearGradient>
            <linearGradient id="ringFill" gradientUnits="userSpaceOnUse" x1="778" y1="300" x2="705" y2="606">
              <stop offset="0" stop-color="#ff6f62" />
              <stop offset="0.28" stop-color="#fb675c" />
              <stop offset="0.55" stop-color="#aa4840" />
              <stop offset="0.8" stop-color="#6f2b26" />
              <stop offset="0.97" stop-color="#55201b" />
            </linearGradient>
          </defs>
          <rect x="257" y="85" width="1177" height="690" fill="url(#sky)" />

          <path d="M660 302C690 245 740 193 805 194C880 195 990 270 1075 345C1150 415 1198 505 1198 580C1198 690 1060 768 930 768C800 768 700 690 650 600" fill="none" stroke="#f8f400" stroke-width="2" />
          <path d="M727 458C727 415 738 375 770 340C790 322 825 317 855 317C950 320 1040 380 1090 435C1112 460 1124 480 1124 495C1124 575 1030 661 925 661C850 661 790 625 760 575C740 540 727 500 727 458Z" fill="none" stroke="#f8f400" stroke-width="2" />

          <path d="M606.500 85V333" stroke="#4d5a30" />
          <path d="M606.500 578V775" stroke="#111" />
          <path d="M257 365.500H574" stroke="#4a3428" />

          <path fill-rule="evenodd" fill="url(#ringFill)" stroke="#dc5a52" stroke-width="3" d="M556.500 458a170 170 0 1 0 340 0a170 170 0 1 0-340 0zM615 458a112 112 0 1 0 224 0a112 112 0 1 0-224 0z" />
          <circle cx="727" cy="458" r="109" fill="none" stroke="#d6564f" stroke-width="6" />

          <path d="M638 365.500H676M778 365.500H868" stroke="#4f8089" />
          <path d="M676 365.500H778" stroke="#3d4a60" />
          <path d="M868 365.500H1434" stroke="#1e2a44" />
          <path d="M606.500 405V578" stroke="#58d4d8" />

          <g class="tip">
            <rect x="589.500" y="390.500" width="53" height="17" rx="2" fill="#fff" fill-opacity=".55" stroke="#8f98a8" />
            <text x="593" y="403" font-size="12" fill="#6e5a5a">圆锥(11)</text>
          </g>

          <!-- WCS -->
          <path d="M727.500 458V403" stroke="#2d8a2d" />
          <path d="M727 405l2 12 1 28-3 13-2-13-1-28z" fill="#2d8a2d" />
          <path d="M727 458.500H784" stroke="#e03030" />
          <path d="M741 458l20-2 18 2-10 2h-18z" fill="#c8302c" />
          <circle cx="727" cy="458" r="3" fill="#1030c0" />
          <text class="cap" x="731" y="401" fill="#3a9a3a">YC</text>
          <text class="cap" x="727" y="458" fill="#2a5ae0">ZC</text>
          <text class="cap" x="768" y="454" fill="#d04848">XC</text>

          <!-- 绝对坐标系 -->
          <rect x="314" y="694" width="23" height="23" fill="#d6d8d6" stroke="#b0b0b0" stroke-width="2" />
          <path d="M313.500 716V674" stroke="#2d8a2d" />
          <path d="M313 680l2 4 1 8-1 6-3 12v-12l-2-6 1-8z" fill="#2d8a2d" />
          <path d="M313 717.500H353" stroke="#c03030" />
          <path d="M337 716h13l-6 2h-7z" fill="#d02a2a" stroke="#b02020" />
          <rect x="310" y="713" width="6" height="8" fill="#1030c0" />
          <path d="M310 713h6M310 721h6" stroke="#2060ff" />
          <text class="cap small-cap" x="310" y="676" fill="#5cb060">Y</text>
          <text class="cap small-cap" x="353" y="720" fill="#e07070">X</text>
        </svg>
      </div>
    </main>

    <div class="selbar">
      <div class="select first"><span>没有选择过滤器</span><i class="drop"></i></div>
      <div class="select second"><span>整个装配</span><i class="drop"></i></div>
      <div
        v-for="(t, i) in row3"
        :key="i"
        class="cell"
        :class="[t.kind, { on: t.on }]"
        :style="{ width: t.w + 'px', marginLeft: t.ml + 'px' }"
      >
        <svg v-if="!widths[t.kind]" class="ico"><use :href="'#' + t.kind" /></svg>
      </div>
    </div>

    <footer class="status">
      <span class="status-msg">选择对象并使用 MB3，或者双击某一对象</span>
      <span class="status-obj">圆锥(11)</span>
    </footer>

    <!-- 水印 -->
    <svg class="watermark" viewBox="1130 725 304 102" width="304" height="102" xmlns="http://www.w3.org/2000/svg">
      <path d="M1176 727l43 25v48l-43 24-43-24v-48z" fill="#6f9ed4" stroke="#f2f4f8" stroke-width="2" />
      <path d="M1192 737l26 15v48l-42 23-21-12-2-21 22 11 23-13v-25z" fill="#6cc2ec" />
      <path d="M1176 753l22 12v24l-22 12-22-12v-24z" fill="#fff" />
      <path d="M1175 757l18 10-18 10-18-10z" fill="#6f9ed4" />
      <path d="M1157 767l18 10v20l-18-10z" fill="#6f9ed4" />
      <path d="M1193 767l-18 10v20l18-10z" fill="#6cc2ec" />
      <text class="wm-big" x="1228" y="784" textLength="198" lengthAdjust="spacingAndGlyphs">3D世界网</text>
      <text class="wm-small" x="1228" y="809" textLength="195" lengthAdjust="spacing">WWW.3DSJW.COM</text>
    </svg>
  </div>
</template>

<style>
html,
body {
  margin: 0;
  overflow: hidden;
}
</style>

<style scoped>
.app {
  position: relative;
  width: 1434px;
  height: 830px;
  display: flex;
  flex-direction: column;
  overflow: hidden;
  background: #d4dbec;
  font-family: "Liberation Sans", "Noto Sans CJK SC", sans-serif;
  font-size: 12px;
  color: #1c2338;
}
.defs {
  display: none;
}
.ico {
  width: 20px;
  height: 20px;
  flex: none;
}
i {
  display: block;
  flex: none;
}

.menubar {
  height: 25px;
  display: flex;
  align-items: center;
  padding-bottom: 2px;
  box-sizing: border-box;
  background: linear-gradient(#fdfdfe 0, #f0f2f8 5px, #d4dbec 8px);
  border-bottom: 1px solid #b9bfce;
  white-space: nowrap;
  flex: none;
}
.menu-logo {
  width: 16px;
  height: 16px;
  margin: 0 8px 0 0;
  flex: none;
}
.menu {
  margin-right: 12.500px;
  color: #2a3048;
}
.menu.wide {
  margin-left: 8px;
}

.toolbar {
  height: 26px;
  display: flex;
  align-items: center;
  background: #d4dbec;
  border-bottom: 1px solid #c6ccdb;
  flex: none;
  box-sizing: border-box;
}
.toolbar.tall {
  height: 34px;
  border-bottom: 1px solid #b4bac9;
}
.cell {
  flex: none;
  display: flex;
  align-items: center;
  justify-content: center;
  height: 100%;
  position: relative;
}
.cell.s {
  background: #eef1f8;
  border-left: 1px solid #aeb4c4;
  box-sizing: border-box;
  height: 90%;
}
.cell.d {
  background: radial-gradient(circle, #8f96a6 1px, transparent 1.200px) 0 0 / 3px 4px;
  height: 70%;
}
.cell.a::after,
.cell.sa::after,
.drop {
  content: "";
  width: 0;
  height: 0;
  border-left: 4.500px solid transparent;
  border-right: 4.500px solid transparent;
  border-top: 5px solid #111;
}
.cell.sa::after {
  border-left-width: 3px;
  border-right-width: 3px;
  border-top: 3.500px solid #24386a;
  margin-top: 7px;
}
.cell.start {
  justify-content: flex-start;
  gap: 2px;
  font-size: 12px;
}
.cell.start .ico {
  width: 18px;
  height: 18px;
}
.cell.search {
  background: #fff;
  height: 24px;
  border-radius: 2px;
  justify-content: space-between;
  padding: 0 2px 0 4px;
  box-sizing: border-box;
  border: 1px solid #c8cedb;
}
.placeholder {
  color: #a9a9a9;
}

.main {
  height: 690px;
  flex: none;
  display: flex;
}
.rail {
  width: 20px;
  flex: none;
  background: #b9c5da;
  overflow: hidden;
}
.rail-cell {
  display: flex;
  align-items: center;
  justify-content: center;
  box-sizing: border-box;
}
.rail-cell.white {
  background: linear-gradient(90deg, #eef2fa, #fff);
  border-bottom: 1px solid #ccd3e0;
}
.rail-cell.gearcell {
  background: none;
  border: 0;
  align-items: flex-start;
  justify-content: flex-start;
  padding-top: 5px;
}
.rail-cell.gearcell .ico {
  margin-left: -5px;
}
.rail-cell .ico {
  width: 18px;
  height: 18px;
}

.nav {
  width: 237px;
  flex: none;
  box-sizing: border-box;
  padding-left: 4px;
  background: #d8e3f3;
  display: flex;
  flex-direction: column;
}
.nav-head {
  height: 37px;
  flex: none;
  display: flex;
  align-items: center;
  justify-content: space-between;
  padding: 8px 5px 0 5px;
  box-sizing: border-box;
  width: 223px;
}
.maximize {
  width: 10px;
  height: 7px;
  border: 1px solid #111;
  border-top-width: 2px;
  margin-right: 0;
}
.nav-box {
  width: 223px;
  height: 568px;
  flex: none;
  box-sizing: border-box;
  border: 1px solid #a6adbb;
  background: #fff;
  display: flex;
  flex-direction: column;
}
.cols {
  height: 19px;
  flex: none;
  display: flex;
  align-items: center;
  border-bottom: 1px solid #cfd2d8;
  background: linear-gradient(#fff, #fff 40%, #f1f2f3);
  position: relative;
}
.col-name {
  margin-left: 7px;
}
.sort {
  margin-left: 12px;
  width: 0;
  height: 0;
  border-left: 4px solid transparent;
  border-right: 4px solid transparent;
  border-bottom: 4px solid #b5b9c0;
}
.col-new {
  margin-left: auto;
  width: 38px;
  box-sizing: border-box;
  padding-left: 6px;
  border-left: 1px solid #d8dade;
  line-height: 19px;
}
.tree-wrap {
  flex: 1;
  min-height: 0;
  display: flex;
}
.tree {
  flex: 1;
  min-width: 0;
  overflow: hidden;
  position: relative;
}
.tree-line {
  position: absolute;
  border-left: 1px dotted #8a8a8a;
}
.tree-line.top {
  left: 11px;
  top: 14px;
  height: 30px;
}
.tree-line.feat {
  left: 30px;
  top: 53px;
  height: 500px;
}
.root {
  height: 18px;
  display: flex;
  align-items: center;
  padding-left: 6px;
  color: #1b1b1b;
  position: relative;
}
.exp {
  width: 9px;
  height: 9px;
  border: 1px solid #8f95a0;
  background: linear-gradient(#fff, #dfe2e8);
  margin-right: 4px;
  position: relative;
}
.exp::before,
.exp.plus::after {
  content: "";
  position: absolute;
  background: #223;
}
.exp::before {
  left: 2px;
  top: 4px;
  width: 5px;
  height: 1px;
}
.exp.plus::after {
  left: 4px;
  top: 2px;
  width: 1px;
  height: 5px;
}
.ico.small {
  width: 17px;
  height: 17px;
}
.root span {
  margin-left: 1px;
}
.root .ico + .ico {
  margin-left: -1px;
}
.feat-row {
  height: 18px;
  display: flex;
  align-items: center;
  padding-left: 31px;
  color: #a8a8a8;
}
.dash {
  width: 9px;
  border-top: 1px dotted #8a8a8a;
}
.box {
  width: 11px;
  height: 11px;
  border: 1px solid #111;
  background: #fff;
  margin-right: 2px;
}
.box svg {
  display: block;
  width: 11px;
  height: 11px;
}
.feat-row .ico.small {
  width: 16px;
  height: 16px;
}
.feat-main {
  flex: 1;
  min-width: 0;
  height: 18px;
  display: flex;
  align-items: center;
  justify-content: space-between;
  padding-left: 3px;
  margin-left: 0;
  white-space: nowrap;
}
.feat-main.sel {
  background: #99ccff;
  color: #fff;
}
.feat-main.strong {
  color: #111;
}
.ok {
  width: 15px;
  height: 15px;
  flex: none;
}
.vscroll {
  width: 17px;
  flex: none;
  background: #f4f4f5;
  display: flex;
  flex-direction: column;
  align-items: center;
  padding-top: 7px;
  box-sizing: border-box;
}
.tri {
  width: 0;
  height: 0;
  border: 4px solid transparent;
}
.tri.up {
  border-bottom-color: #333;
  border-top-width: 0;
}
.tri.down {
  border-top-color: #333;
  border-bottom-width: 0;
  margin-top: 64px;
}
.tri.left {
  border-right-color: #444;
  border-left-width: 0;
  margin-left: 7px;
}
.tri.right {
  border-left-color: #444;
  border-right-width: 0;
  margin-left: auto;
  margin-right: 22px;
}
.vthumb {
  width: 14px;
  height: 394px;
  margin-top: 48px;
  flex: none;
  border: 1px solid #b2b5bb;
  box-sizing: border-box;
  border-radius: 2px;
  background: linear-gradient(90deg, #f6f6f6, #e2e3e5 50%, #bfc1c5);
  display: flex;
  align-items: center;
  justify-content: center;
}
.grip-h {
  width: 7px;
  height: 7px;
  background: repeating-linear-gradient(#555 0 1px, transparent 1px 3px);
}
.hscroll {
  height: 16px;
  flex: none;
  display: flex;
  align-items: center;
  background: #f4f4f5;
  border-top: 1px solid #e3e4e6;
}
.hthumb {
  width: 86px;
  height: 15px;
  margin-left: 8px;
  box-sizing: border-box;
  border: 1px solid #a8abb1;
  border-radius: 2px;
  background: linear-gradient(#f6f6f6, #e2e3e5 50%, #bcbec2);
  display: flex;
  align-items: center;
  justify-content: center;
}
.grip-v {
  width: 7px;
  height: 7px;
  background: repeating-linear-gradient(90deg, #555 0 1px, transparent 1px 3px);
}
.sash {
  height: 8px;
  flex: none;
  width: 223px;
  background: #dce8f8;
  position: relative;
}
.sash::after {
  content: "";
  position: absolute;
  left: 76px;
  top: 1px;
  width: 72px;
  height: 4px;
  background: radial-gradient(circle, #8f99aa 1px, transparent 1.200px) 0 0 / 5px 4px;
}
.fold {
  width: 222px;
  height: 22px;
  flex: none;
  margin-bottom: 2px;
  box-sizing: border-box;
  padding: 0 11px 2px;
  display: flex;
  align-items: center;
  justify-content: space-between;
  background: linear-gradient(#fbfcfd, #eff1f4 50%, #e7eaee);
  color: #3a4a6c;
}
.fold svg {
  width: 9px;
  height: 11px;
  flex: none;
}
.viewport {
  flex: 1;
  min-width: 0;
  overflow: hidden;
}
.viewport svg {
  display: block;
}
.cap {
  font-size: 12px;
}
.small-cap {
  font-size: 10px;
}

.selbar {
  height: 34px;
  flex: none;
  box-sizing: border-box;
  display: flex;
  align-items: center;
  background: #d7e3f4;
  border-bottom: 1px solid #c3cfe2;
}
.select {
  height: 22px;
  flex: none;
  box-sizing: border-box;
  background: #fff;
  border-radius: 2px;
  box-shadow: inset 0 1px 0 #aab;
  padding: 0 6px 0 2px;
  display: flex;
  align-items: center;
  justify-content: space-between;
}
.select.first {
  width: 146px;
}
.select.second {
  width: 157px;
  margin-left: 6px;
}
.drop {
  border-left-width: 4px;
  border-right-width: 4px;
}
.selbar .cell {
  height: 24px;
}
.selbar .cell.on {
  background: #fcd589;
  border: 1px solid #c9a050;
  border-radius: 3px;
  box-sizing: border-box;
}
.selbar .cell .ico {
  width: 18px;
  height: 18px;
}

.status {
  height: 21px;
  flex: none;
  box-sizing: border-box;
  display: flex;
  align-items: center;
  background: linear-gradient(#e0e9f6, #cfdcef 50%, #bfcfe6);
  border-top: 1px solid #f2f6fc;
  color: #283a5c;
  font-family: "DejaVu Sans", "Noto Sans CJK SC", sans-serif;
  font-weight: 700;
  white-space: nowrap;
}
.status-msg {
  width: 737px;
  flex: none;
  letter-spacing: 0.2px;
}
.status-obj {
  border-left: 1px solid #93a3bd;
  padding-left: 3px;
  line-height: 20px;
}

.watermark {
  position: absolute;
  right: 0;
  top: 725px;
}
.wm-big {
  font-family: "Noto Sans CJK SC", sans-serif;
  font-weight: 700;
  font-size: 40px;
  fill: #6cc3ec;
  stroke: #f4f7fb;
  stroke-width: 3px;
  paint-order: stroke;
}
.wm-small {
  font-family: "DejaVu Sans", sans-serif;
  font-weight: 700;
  font-size: 14px;
  fill: #6cc3ec;
  stroke: #f4f7fb;
  stroke-width: 2px;
  paint-order: stroke;
}
</style>
